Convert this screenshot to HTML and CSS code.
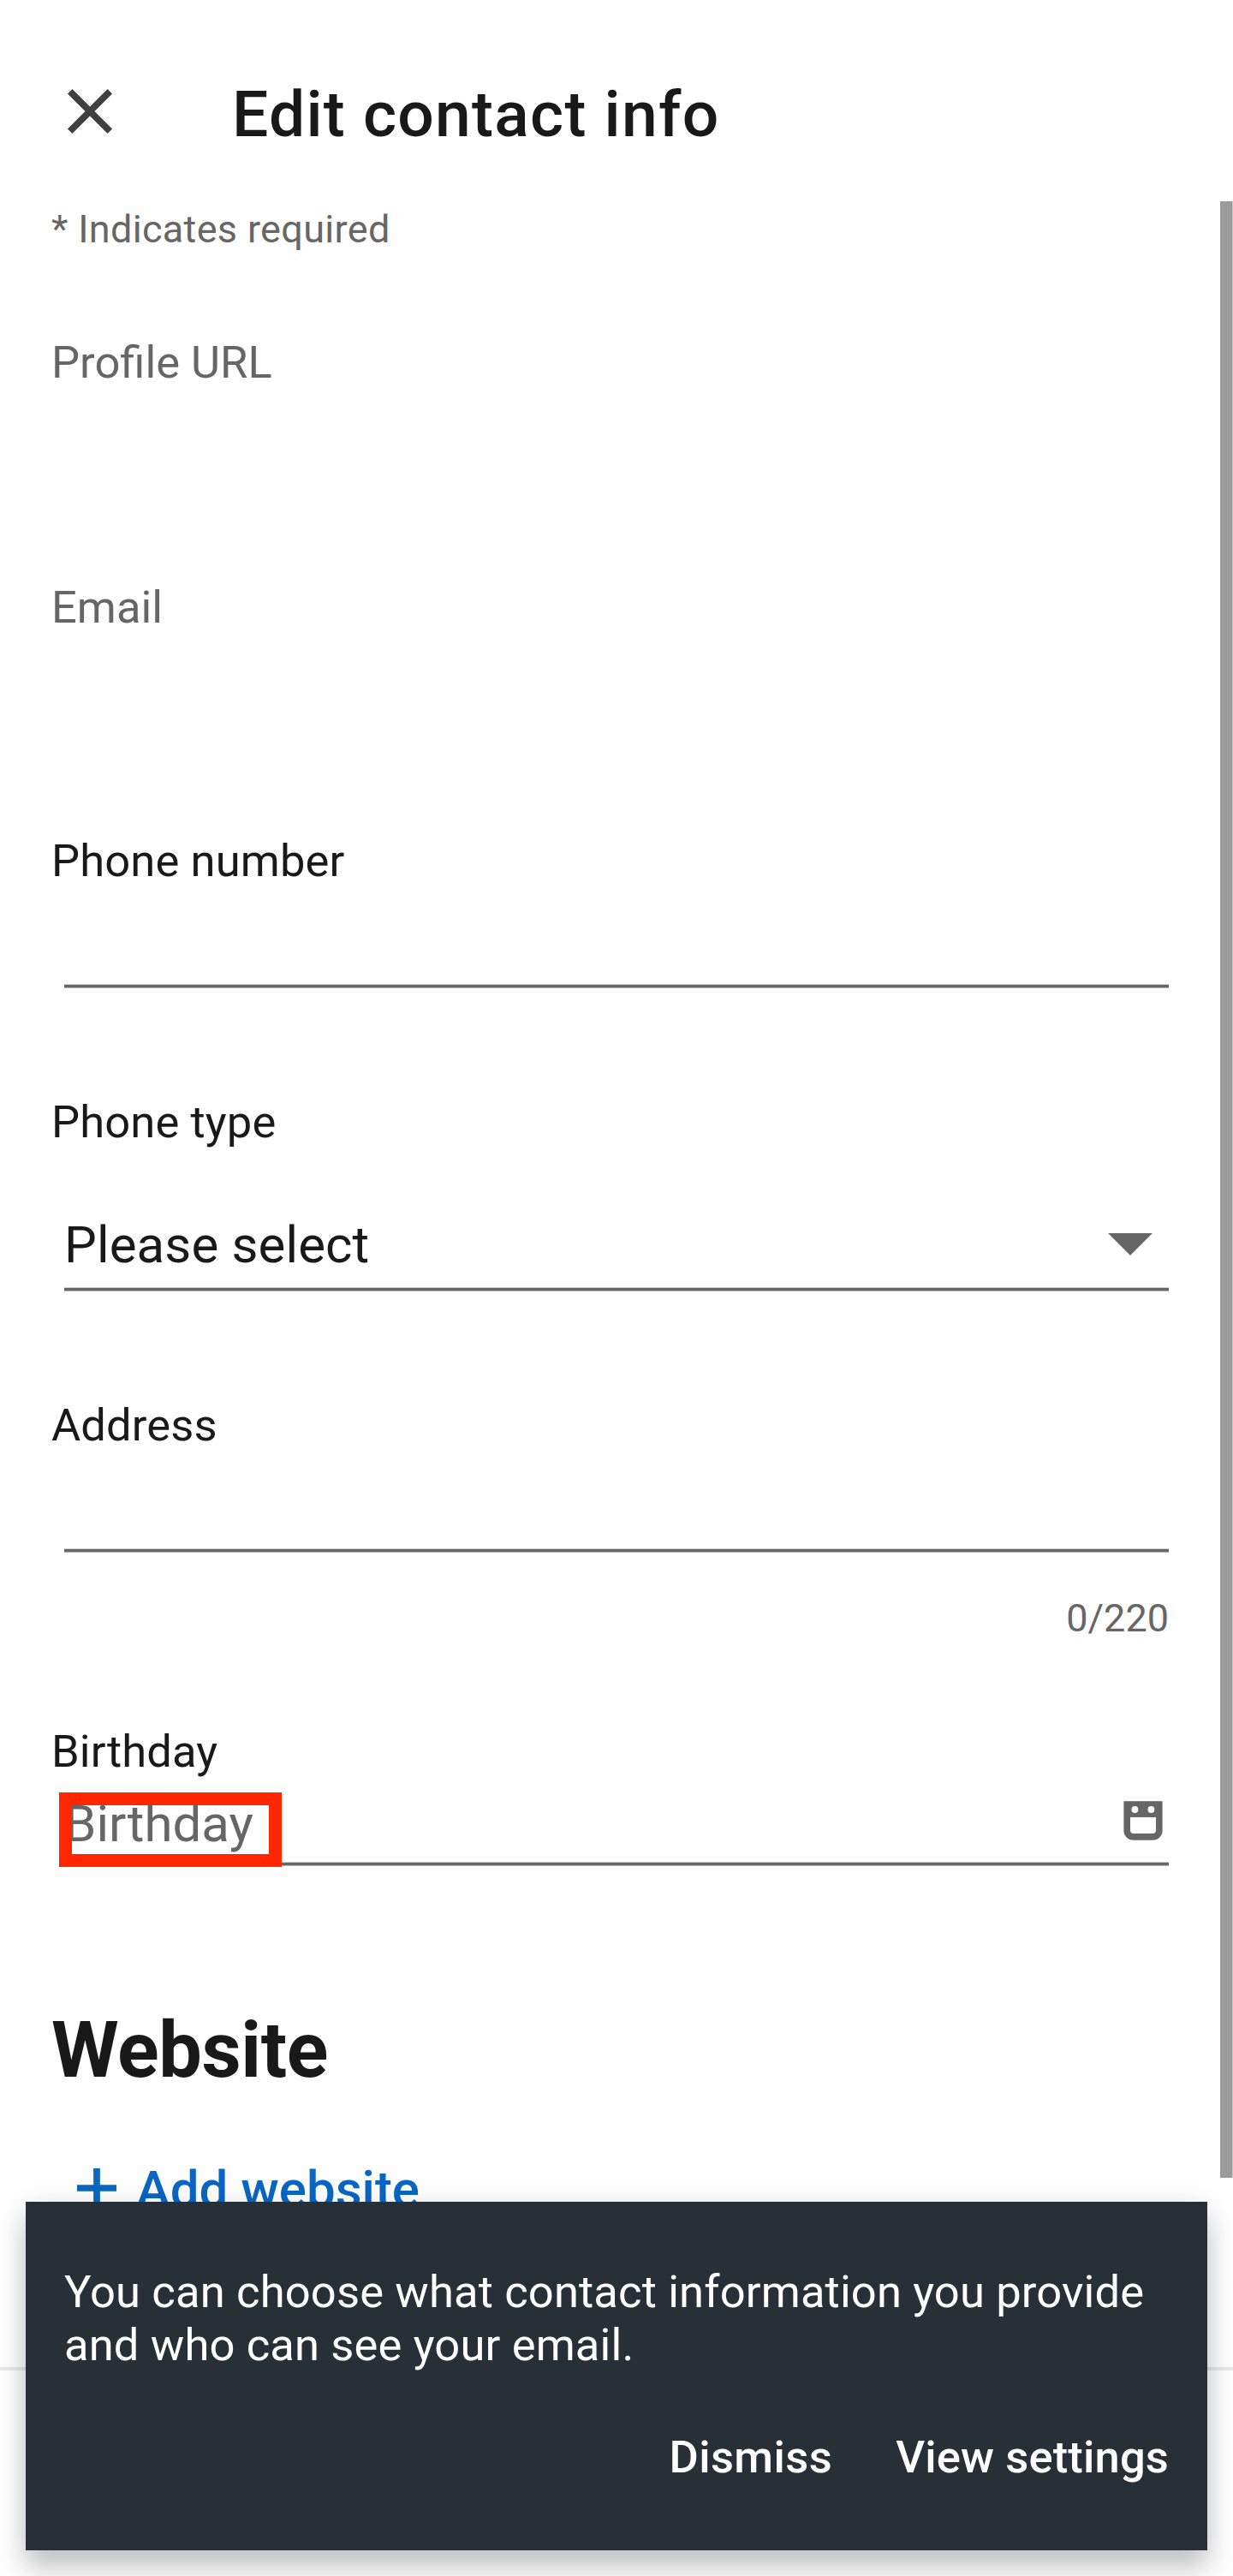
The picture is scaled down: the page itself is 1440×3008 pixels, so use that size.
FILE: index.html
```html
<!DOCTYPE html>
<html lang="en">
<head>
<meta charset="utf-8">
<title>Edit contact info</title>
<link rel="stylesheet" href="styles.css">
</head>
<body>
<div class="screen">
  <header class="toolbar">
    <svg class="close-icon" viewBox="0 0 90 90" aria-label="Close"><path d="M21.7 21.7 68.3 68.3M68.3 21.7 21.7 68.3"/></svg>
    <h1 class="title">Edit contact info</h1>
  </header>

  <main class="form">
    <p class="required-note">* Indicates required</p>

    <div class="field field-url"><div class="label muted">Profile URL</div></div>
    <div class="field field-email"><div class="label muted">Email</div></div>

    <div class="field field-phone">
      <div class="label">Phone number</div>
      <div class="input input-empty"></div>
    </div>

    <div class="field field-type">
      <div class="label">Phone type</div>
      <div class="input input-select">
        <span>Please select</span>
        <svg class="caret" viewBox="0 0 52 26"><path d="M0 0H52L26 26Z"/></svg>
      </div>
    </div>

    <div class="field field-address">
      <div class="label">Address</div>
      <div class="input input-empty"></div>
      <div class="counter">0/220</div>
    </div>

    <div class="field field-birthday">
      <div class="label">Birthday</div>
      <div class="input input-date">
        <span class="placeholder">Birthday</span>
        <svg class="calendar" viewBox="0 0 46 46"><path fill-rule="evenodd" d="M.4.2H45.6V34.500A11.300 11.300 0 0 1 34.300 45.800H11.700A11.300 11.300 0 0 1 .4 34.500ZM8 19V34.300A3.700 3.700 0 0 0 11.700 38H34.300A3.700 3.700 0 0 0 38 34.300V19ZM9.500 10A3.900 3.900 0 1 0 17.300 10A3.900 3.900 0 1 0 9.500 10ZM28.500 10A3.900 3.900 0 1 0 36.300 10A3.900 3.900 0 1 0 28.500 10Z"/></svg>
        <span class="highlight"></span>
      </div>
    </div>

    <h2 class="section-title">Website</h2>
    <div class="add-link">
      <svg class="plus" viewBox="0 0 46 46"><path d="M23 0V46M0 23H46"/></svg>
      <span>Add website</span>
    </div>
  </main>

  <footer class="bottom-bar"></footer>
  <div class="scrollbar"></div>

  <div class="snackbar">
    <p class="snackbar-text">You can choose what contact information you provide<br>and who can see your email.</p>
    <div class="snackbar-actions"><span class="dismiss">Dismiss</span><span>View settings</span></div>
  </div>
</div>
</body>
</html>
```
FILE: styles.css
```css
* { box-sizing: border-box; }

body {
  margin: 0;
  background: #fefefe;
  color: #191919;
  font-family: Roboto, "Liberation Sans", sans-serif;
}

h1, h2, p { margin: 0; }
svg { display: block; flex: none; }

.screen {
  position: relative;
  width: 1440px;
  height: 3008px;
  overflow: hidden;
  display: flex;
  flex-direction: column;
}

.toolbar {
  height: 234px;
  flex: none;
  display: flex;
  align-items: flex-start;
  gap: 121px;
  padding: 85px 0 0 60px;
}

.close-icon { width: 90px; height: 90px; }
.close-icon path { stroke: #404040; stroke-width: 7.7; fill: none; }

.title {
  margin-top: 4px;
  font-size: 75px;
  line-height: 88px;
  font-weight: 500;
  letter-spacing: 1.25px;
}

.form {
  flex: none;
  height: 2530px;
  padding: 7px 75px 0 60px;
}

.required-note {
  font-size: 45px;
  line-height: 54px;
  letter-spacing: 0.33px;
  color: #666;
}

.label { font-size: 52.5px; line-height: 62px; letter-spacing: 0.12px; }
.muted { color: #666; letter-spacing: normal; }

.field-url { padding-top: 97px; }
.field-email { padding-top: 224px; }
.field-phone { padding-top: 234px; }
.field-type { padding-top: 125px; }
.field-address { padding-top: 125px; }
.field-birthday { padding-top: 97px; }

.input {
  display: flex;
  justify-content: space-between;
  align-items: flex-start;
  margin-left: 15px;
  font-size: 60px;
  line-height: 70px;
  background: linear-gradient(#d0d0d0 0 1px, #666 1px 4px, #b0b0b0 4px 5px) bottom / 100% 5px no-repeat;
}

.input-empty { height: 118px; }

.input-select {
  height: 167px;
  padding: 78px 19px 0 0;
  letter-spacing: 0.12px;
}

.caret {
  width: 52px;
  height: 26px;
  margin-top: 21px;
  fill: #666;
}

.counter {
  margin-top: 50px;
  font-size: 45px;
  line-height: 54px;
  text-align: right;
  color: #666;
}

.input-date {
  position: relative;
  height: 103px;
  padding: 19px 7px 0 0;
}

.placeholder { color: #666; }

.calendar {
  width: 46px;
  height: 46px;
  margin-top: 8px;
  fill: #666;
}

.highlight {
  position: absolute;
  left: -6px;
  top: 17px;
  width: 260px;
  height: 87px;
  border: 15px solid #ff2600;
}

.section-title {
  margin-top: 163px;
  font-size: 90px;
  line-height: 106px;
  font-weight: 700;
  letter-spacing: -0.4px;
}

.add-link {
  display: flex;
  gap: 23px;
  margin: 74px 0 0 30px;
  font-size: 60px;
  line-height: 70px;
  font-weight: 500;
  letter-spacing: 0;
  color: #0a66c2;
}

.plus {
  width: 46px;
  height: 46px;
  margin-top: 10px;
  stroke: #0a66c2;
  stroke-width: 7.7;
}

.bottom-bar {
  flex: 1;
  border-top: 4px solid #e8e8e8;
}

.scrollbar {
  position: absolute;
  left: 1425px;
  top: 235px;
  width: 15px;
  height: 2308px;
  background: #9b9b9b;
  border-right: 1px solid #c8c8c8;
}

.snackbar {
  position: absolute;
  left: 30px;
  top: 2571px;
  width: 1380px;
  height: 407px;
  padding: 74px 45px 0;
  background: #283037;
  color: #fff;
  font-size: 52.5px;
  line-height: 62px;
  box-shadow: 0 22px 30px rgba(0, 0, 0, 0.2), 0 3px 30px rgba(0, 0, 0, 0.08);
}

.snackbar-text { letter-spacing: 0.15px; white-space: nowrap; }

.snackbar-actions {
  display: flex;
  justify-content: flex-end;
  gap: 74px;
  margin-top: 69px;
  font-weight: 500;
  letter-spacing: 0.15px;
}

.dismiss { letter-spacing: 0.4px; }
```
